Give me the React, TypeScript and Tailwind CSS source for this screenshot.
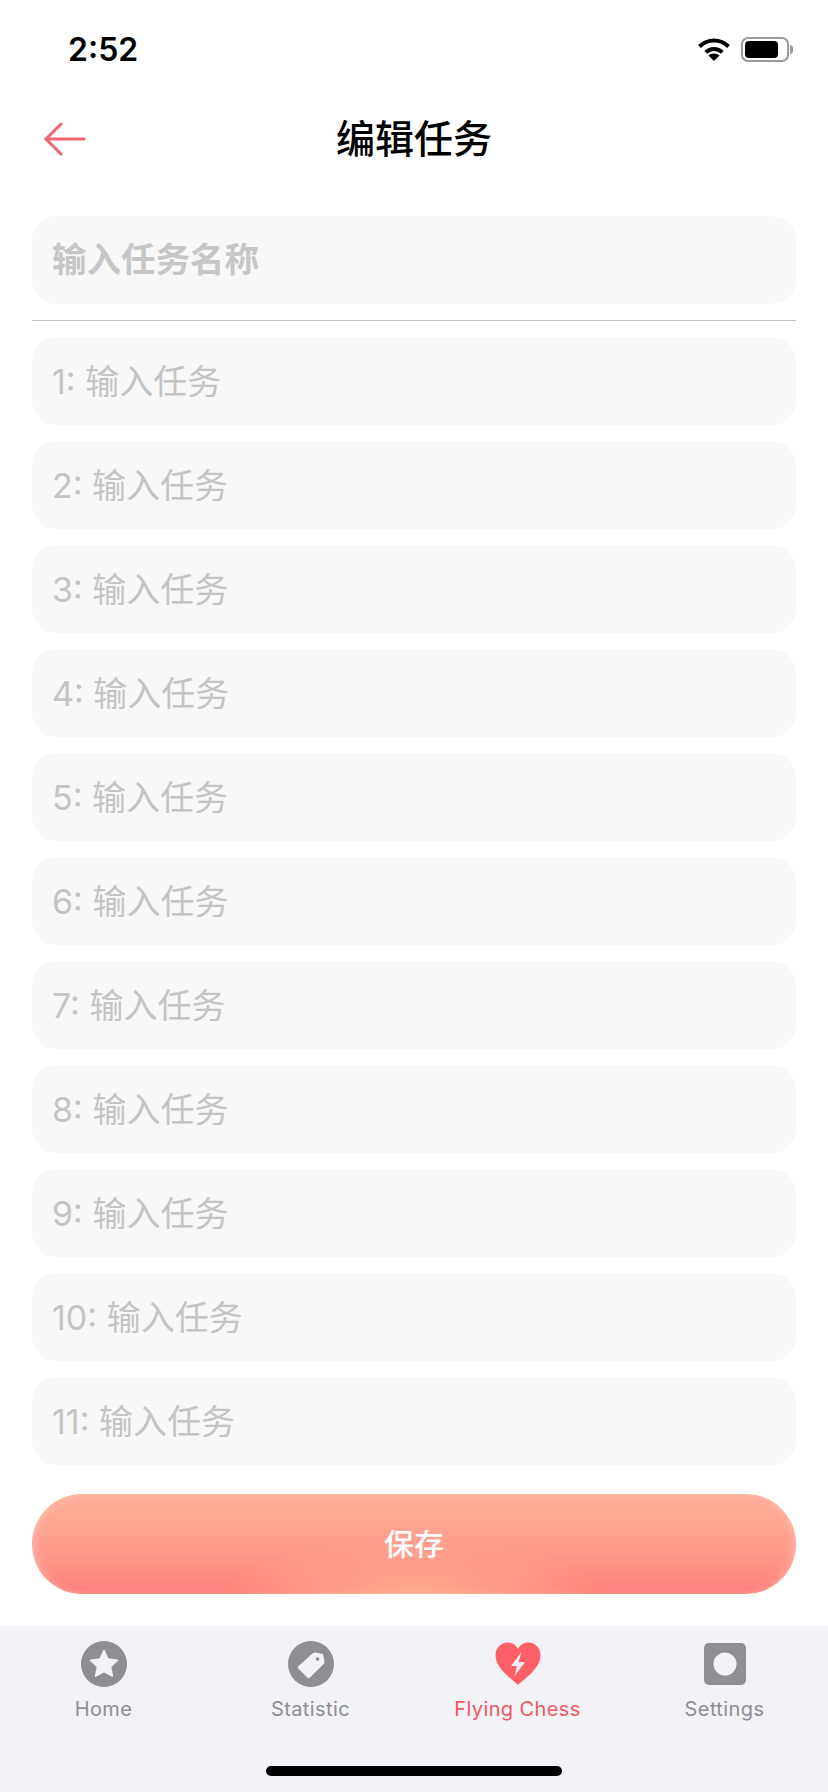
import React from 'react';

const FONT = "font-['Inter','Noto_Sans_CJK_SC',sans-serif]";

const TASK_ROWS = Array.from({ length: 11 }, (_, i) => i + 1);

const WifiIcon = () => (
  <svg width="32" height="24" viewBox="0 0 32 24">
    <path d="M1.500 9.500C5.300 5.800 10.400 3.500 16 3.500s10.700 2.300 14.500 6" fill="none" stroke="#000" strokeWidth="4" />
    <path d="M7.800 15.300c2.100-2.100 5-3.400 8.200-3.400s6.100 1.300 8.200 3.400" fill="none" stroke="#000" strokeWidth="4" />
    <path d="M16 24l-5.500-5.600c1.400-1.200 3.400-2 5.500-2s4.100 0.800 5.500 2z" fill="#000" />
  </svg>
);

const BatteryIcon = () => (
  <div className="flex items-center">
    <div className="w-[48px] h-[25px] rounded-[7px] border-2 border-[#9a9a9a] p-[2px]">
      <div className="w-[33px] h-full rounded-[4px] bg-black" />
    </div>
    <div className="w-[3px] h-[9px] ml-[1px] rounded-r-full bg-[#9a9a9a]" />
  </div>
);

const BackArrow = () => (
  <svg width="42" height="34" viewBox="0 0 42 34" fill="none" stroke="#f0666e" strokeWidth="3" strokeLinecap="round" strokeLinejoin="round">
    <path d="M40 17H2" />
    <path d="M17 2L2 17l15 15" />
  </svg>
);

const HomeIcon = () => (
  <svg width="46" height="46" viewBox="0 0 46 46">
    <circle cx="23" cy="23" r="23" fill="#8e8e93" />
    <path
      d="M23 9.500l4.100 8.600 9.400 1.200-6.900 6.500 1.800 9.300-8.400-4.600-8.400 4.600 1.800-9.300-6.900-6.500 9.400-1.200z"
      fill="#f2f2f7"
      stroke="#f2f2f7"
      strokeWidth="1.500"
      strokeLinejoin="round"
    />
  </svg>
);

const StatisticIcon = () => (
  <svg width="46" height="46" viewBox="0 0 46 46">
    <circle cx="23" cy="23" r="23" fill="#8e8e93" />
    <path
      d="M27 11.500l8 1.500 1.500 8a2 2 0 0 1-.6 1.800L22 36.500a2 2 0 0 1-2.800 0l-8.700-8.700a2 2 0 0 1 0-2.800L25.200 12.100a2 2 0 0 1 1.800-.6z"
      fill="#f2f2f7"
    />
    <circle cx="29.500" cy="18" r="1.800" fill="#8e8e93" />
  </svg>
);

const ChessIcon = () => (
  <svg width="46" height="44" viewBox="0 0 46 44">
    <path
      d="M23 43C19 38.500 0.500 27 0.500 13.500 0.500 6 6 0.500 12.500 0.500 17 0.500 21 3 23 7 25 3 29 0.500 33.500 0.500 40 0.500 45.500 6 45.500 13.500 45.500 27 27 38.500 23 43z"
      fill="#ff5f66"
    />
    <path d="M26.500 10L16 24h6l-2.500 10L30 20h-6.500z" fill="#f2f2f7" />
  </svg>
);

const SettingsIcon = () => (
  <svg width="42" height="42" viewBox="0 0 42 42">
    <rect width="42" height="42" rx="5" fill="#8e8e93" />
    <circle cx="21" cy="21" r="11.500" fill="#f2f2f7" />
  </svg>
);

const TABS = [
  { label: 'Home', icon: <HomeIcon />, active: false },
  { label: 'Statistic', icon: <StatisticIcon />, active: false },
  { label: 'Flying Chess', icon: <ChessIcon />, active: true },
  { label: 'Settings', icon: <SettingsIcon />, active: false },
];

export default function App() {
  return (
    <div className={`${FONT} w-[828px] h-[1792px] flex flex-col bg-white overflow-hidden`}>
      {/* Status bar */}
      <div className="h-[98px] shrink-0 flex items-center justify-between pl-[68px] pr-[35px]">
        <span className="pt-[2px] text-[32px] leading-none font-semibold text-black">2:52</span>
        <div className="flex items-center gap-[11px]">
          <WifiIcon />
          <BatteryIcon />
        </div>
      </div>

      {/* Header */}
      <div className="relative h-[80px] shrink-0 flex items-center justify-center">
        <button className="absolute left-[44px] top-[24px]">
          <BackArrow />
        </button>
        <h1 className="text-[39px] leading-none font-medium text-black">编辑任务</h1>
      </div>

      {/* Form */}
      <div className="px-8 pt-[38px] flex flex-col">
        <div className="h-[88px] rounded-[24px] bg-[#f8f8f8] flex items-center px-5">
          <span className="text-[34.500px] leading-none font-semibold text-[#c6c6c6]">输入任务名称</span>
        </div>
        <div className="h-px bg-[#c4c4c4] mt-4 mb-4" />
        <div className="flex flex-col gap-4">
          {TASK_ROWS.map((n) => (
            <div key={n} className="h-[88px] rounded-[24px] bg-[#f8f8f8] flex items-center px-5">
              <span className="pt-[1px] text-[34px] leading-none text-[#c4c4c4]">{n}: 输入任务</span>
            </div>
          ))}
        </div>
        <button className="mt-[29px] h-[100px] rounded-[50px] flex items-center justify-center bg-[radial-gradient(ellipse_190px_60px_at_50%_104%,#ffb08e_0%,rgba(255,170,140,0)_100%),linear-gradient(180deg,#ffb19b_0%,#ff9c8c_55%,#ff7f7b_100%)] shadow-[inset_6px_0_10px_-4px_rgba(255,200,185,0.7),inset_-6px_0_10px_-4px_rgba(255,200,185,0.7)]">
          <span className="text-[30px] leading-none font-medium text-white">保存</span>
        </button>
      </div>

      {/* Tab bar */}
      <div className="mt-auto h-[166px] shrink-0 bg-[#f2f2f7] flex flex-col">
        <div className="grid grid-cols-4 pt-[15px]">
          {TABS.map((tab) => (
            <div key={tab.label} className="flex flex-col items-center">
              <div className="h-[46px] flex items-center justify-center">{tab.icon}</div>
              <span
                className={`mt-[10px] text-[20px] leading-[24px] tracking-[0.4px] ${
                  tab.active ? 'text-[#f0595f]' : 'text-[#8e8e93]'
                }`}
              >
                {tab.label}
              </span>
            </div>
          ))}
        </div>
        <div className="mt-auto mb-[16px] mx-auto w-[296px] h-[10px] rounded-full bg-black" />
      </div>
    </div>
  );
}
